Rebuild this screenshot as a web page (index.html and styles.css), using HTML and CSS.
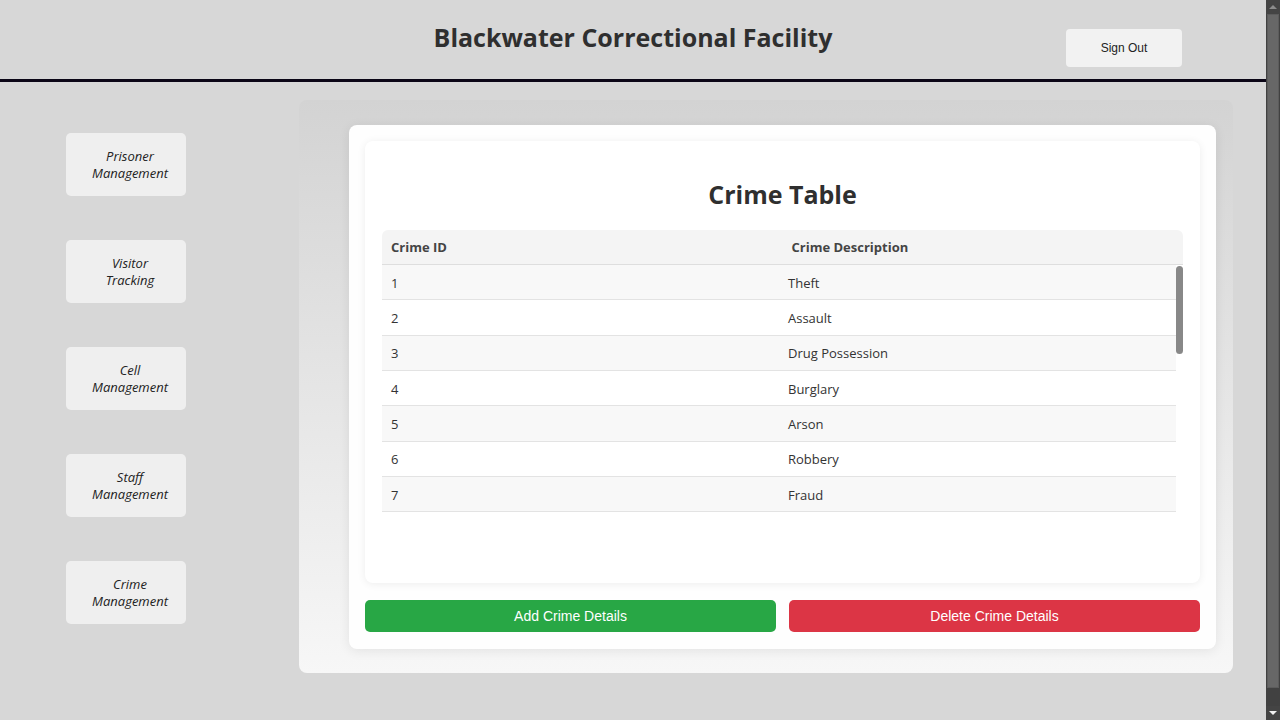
FILE: index.html
```html
<!DOCTYPE html>
<html lang="en">
<head>
<meta charset="utf-8">
<title>Blackwater Correctional Facility</title>
<link rel="stylesheet" href="styles.css">
</head>
<body>
<div class="page">
  <header class="topbar">
    <div class="topbar-spacer"></div>
    <h1 class="site-title">Blackwater Correctional Facility</h1>
    <div class="topbar-actions"><button class="signout">Sign Out</button></div>
  </header>
  <div class="layout">
    <nav class="sidebar">
      <button class="nav-btn">Prisoner<br>Management</button>
      <button class="nav-btn">Visitor<br>Tracking</button>
      <button class="nav-btn">Cell<br>Management</button>
      <button class="nav-btn">Staff<br>Management</button>
      <button class="nav-btn">Crime<br>Management</button>
    </nav>
    <main class="panel">
      <section class="card">
        <div class="table-card">
          <h2 class="table-title">Crime Table</h2>
          <table class="table-head">
            <thead><tr><th>Crime ID</th><th>Crime Description</th></tr></thead>
          </table>
          <div class="table-scroll">
            <table class="table-body">
              <tbody>
                <tr><td>1</td><td>Theft</td></tr>
                <tr><td>2</td><td>Assault</td></tr>
                <tr><td>3</td><td>Drug Possession</td></tr>
                <tr><td>4</td><td>Burglary</td></tr>
                <tr><td>5</td><td>Arson</td></tr>
                <tr><td>6</td><td>Robbery</td></tr>
                <tr><td>7</td><td>Fraud</td></tr>
              </tbody>
            </table>
            <div class="scroll-thumb"></div>
          </div>
        </div>
        <div class="actions">
          <button class="btn btn-add">Add Crime Details</button>
          <button class="btn btn-delete">Delete Crime Details</button>
        </div>
      </section>
    </main>
  </div>
</div>
<div class="vscroll">
  <div class="vscroll-up"></div>
  <div class="vscroll-track"><div class="vscroll-thumb"></div></div>
  <div class="vscroll-down"></div>
</div>
</body>
</html>
```
FILE: styles.css
```css
html {
  background: #d7d7d7;
}
body {
  margin: 0;
  background: #d7d7d7;
  font-family: "Open Sans", "Liberation Sans", sans-serif;
  color: #333;
  display: flex;
  height: 720px;
  overflow: hidden;
}
.page {
  flex: 1;
  min-width: 0;
}

/* window scrollbar */
.vscroll {
  width: 14px;
  height: 720px;
  flex-shrink: 0;
  display: flex;
  flex-direction: column;
  background: #414141;
}
.vscroll-up,
.vscroll-down {
  height: 14px;
  display: flex;
  align-items: center;
  justify-content: center;
  background: #444444;
}
.vscroll-up::before {
  content: "";
  border-left: 4px solid transparent;
  border-right: 4px solid transparent;
  border-bottom: 4px solid #8c8c8c;
}
.vscroll-down::before {
  content: "";
  border-left: 4px solid transparent;
  border-right: 4px solid transparent;
  border-top: 4px solid #f0f0f0;
}
.vscroll-track {
  flex: 1;
  padding: 0 1px 0 1px;
  background: #414141;
}
.vscroll-thumb {
  height: 674px;
  background: #676767;
  border: 1px solid #5c5c5c;
  box-sizing: border-box;
}

.topbar {
  display: grid;
  grid-template-columns: 1fr auto 1fr;
  align-items: start;
  height: 79px;
  border-bottom: 3px solid #0b0616;
}
.site-title {
  margin: 18px 0 0;
  font-size: 25px;
  line-height: 38px;
  font-weight: 700;
  color: #2f2f2f;
}
.topbar-actions {
  display: flex;
  justify-content: flex-end;
  padding-right: 84px;
}
.signout {
  margin-top: 29px;
  width: 116px;
  height: 38px;
  border: none;
  border-radius: 4px;
  background: #f2f2f2;
  font-family: "Liberation Sans", Arial, sans-serif;
  font-size: 12px;
  color: #222;
}

.layout {
  display: flex;
  padding: 18px 33px 0 0;
}
.sidebar {
  width: 233px;
  padding: 33px 0 0 66px;
  display: flex;
  flex-direction: column;
  gap: 44px;
  flex-shrink: 0;
}
.nav-btn {
  width: 120px;
  height: 63px;
  border: none;
  border-radius: 5px;
  background: #efefef;
  font-family: "Open Sans", sans-serif;
  font-style: italic;
  font-size: 13px;
  line-height: 17px;
  color: #222;
  padding: 0 0 0 8px;
}

.panel {
  flex: 1;
  padding: 25px 17px 24px 50px;
  border-radius: 8px;
  background: linear-gradient(to bottom, #d3d3d3, #f7f7f7);
}
.card {
  background: #fefefe;
  border-radius: 8px;
  padding: 16px 16px 17px;
  box-shadow: 0 2px 12px rgba(0, 0, 0, 0.08);
}
.table-card {
  background: #ffffff;
  border-radius: 8px;
  padding: 17px 17px 71px;
  box-shadow: 0 1px 8px rgba(0, 0, 0, 0.07);
}
.table-title {
  margin: 19px 0 19px;
  text-align: center;
  font-size: 25px;
  line-height: 34px;
  font-weight: 700;
  color: #2f2f2f;
}
table {
  width: 100%;
  border-collapse: collapse;
  table-layout: fixed;
}
.table-head th {
  height: 34px;
  padding: 0 9px;
  text-align: left;
  font-size: 13px;
  font-weight: 700;
  color: #444;
  background: #f4f4f4;
  border-bottom: 1px solid #dedede;
}
.table-head th:first-child { border-top-left-radius: 6px; }
.table-head th:last-child { border-top-right-radius: 6px; }
.table-scroll {
  position: relative;
  height: 247px;
  overflow: hidden;
  padding-right: 7px;
}
.scroll-thumb {
  position: absolute;
  top: 1px;
  right: 0;
  width: 7px;
  height: 88px;
  border-radius: 4px;
  background: #888;
}
.table-body td {
  height: 33.33px;
  padding: 1px 9px 0 9px;
  font-size: 13px;
  color: #333;
  border-bottom: 1px solid #e3e3e3;
}
.table-body tr:nth-child(odd) td { background: #f8f8f8; }
.table-body tr:nth-child(even) td { background: #ffffff; }

.actions {
  display: flex;
  gap: 13px;
  margin-top: 17px;
}
.btn {
  flex: 1;
  height: 32px;
  border: none;
  border-radius: 5px;
  color: #fff;
  font-family: "Liberation Sans", Arial, sans-serif;
  font-size: 14px;
}
.btn-add { background: #28a745; }
.btn-delete { background: #dc3545; }
```
